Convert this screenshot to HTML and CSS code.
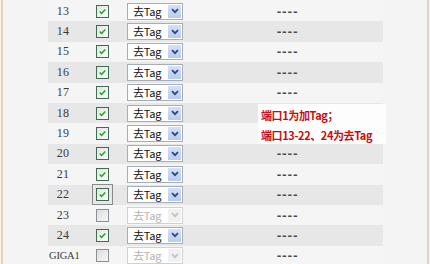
FILE: index.html
```html
<!DOCTYPE html>
<html>
<head>
<meta charset="utf-8">
<link rel="stylesheet" href="styles.css">
</head>
<body>
<div class="frame">
  <div class="panel">
    <div class="table">
      <div class="row"><span class="port">13</span><span class="chk"><span class="box on"><svg viewBox="0 0 13 13"><path d="M3.2 6.6 L5.4 8.8 L9.8 4.2" /></svg></span></span><span class="sel"><span class="dd"><span class="val">去Tag</span><span class="btn"><svg viewBox="0 0 8 6"><path d="M1 1.2 L4 4.2 L7 1.2"/></svg></span></span></span><span class="note">----</span></div>
      <div class="row alt"><span class="port">14</span><span class="chk"><span class="box on"><svg viewBox="0 0 13 13"><path d="M3.2 6.6 L5.4 8.8 L9.8 4.2" /></svg></span></span><span class="sel"><span class="dd"><span class="val">去Tag</span><span class="btn"><svg viewBox="0 0 8 6"><path d="M1 1.2 L4 4.2 L7 1.2"/></svg></span></span></span><span class="note">----</span></div>
      <div class="row"><span class="port">15</span><span class="chk"><span class="box on"><svg viewBox="0 0 13 13"><path d="M3.2 6.6 L5.4 8.8 L9.8 4.2" /></svg></span></span><span class="sel"><span class="dd"><span class="val">去Tag</span><span class="btn"><svg viewBox="0 0 8 6"><path d="M1 1.2 L4 4.2 L7 1.2"/></svg></span></span></span><span class="note">----</span></div>
      <div class="row alt"><span class="port">16</span><span class="chk"><span class="box on"><svg viewBox="0 0 13 13"><path d="M3.2 6.6 L5.4 8.8 L9.8 4.2" /></svg></span></span><span class="sel"><span class="dd"><span class="val">去Tag</span><span class="btn"><svg viewBox="0 0 8 6"><path d="M1 1.2 L4 4.2 L7 1.2"/></svg></span></span></span><span class="note">----</span></div>
      <div class="row"><span class="port">17</span><span class="chk"><span class="box on"><svg viewBox="0 0 13 13"><path d="M3.2 6.6 L5.4 8.8 L9.8 4.2" /></svg></span></span><span class="sel"><span class="dd"><span class="val">去Tag</span><span class="btn"><svg viewBox="0 0 8 6"><path d="M1 1.2 L4 4.2 L7 1.2"/></svg></span></span></span><span class="note">----</span></div>
      <div class="row alt"><span class="port">18</span><span class="chk"><span class="box on"><svg viewBox="0 0 13 13"><path d="M3.2 6.6 L5.4 8.8 L9.8 4.2" /></svg></span></span><span class="sel"><span class="dd"><span class="val">去Tag</span><span class="btn"><svg viewBox="0 0 8 6"><path d="M1 1.2 L4 4.2 L7 1.2"/></svg></span></span></span><span class="note"></span></div>
      <div class="row"><span class="port">19</span><span class="chk"><span class="box on"><svg viewBox="0 0 13 13"><path d="M3.2 6.6 L5.4 8.8 L9.8 4.2" /></svg></span></span><span class="sel"><span class="dd"><span class="val">去Tag</span><span class="btn"><svg viewBox="0 0 8 6"><path d="M1 1.2 L4 4.2 L7 1.2"/></svg></span></span></span><span class="note"></span></div>
      <div class="row alt"><span class="port">20</span><span class="chk"><span class="box on"><svg viewBox="0 0 13 13"><path d="M3.2 6.6 L5.4 8.8 L9.8 4.2" /></svg></span></span><span class="sel"><span class="dd"><span class="val">去Tag</span><span class="btn"><svg viewBox="0 0 8 6"><path d="M1 1.2 L4 4.2 L7 1.2"/></svg></span></span></span><span class="note">----</span></div>
      <div class="row"><span class="port">21</span><span class="chk"><span class="box on"><svg viewBox="0 0 13 13"><path d="M3.2 6.6 L5.4 8.8 L9.8 4.2" /></svg></span></span><span class="sel"><span class="dd"><span class="val">去Tag</span><span class="btn"><svg viewBox="0 0 8 6"><path d="M1 1.2 L4 4.2 L7 1.2"/></svg></span></span></span><span class="note">----</span></div>
      <div class="row alt"><span class="port">22</span><span class="chk"><span class="box on focus"><svg viewBox="0 0 13 13"><path d="M3.2 6.6 L5.4 8.8 L9.8 4.2" /></svg></span></span><span class="sel"><span class="dd"><span class="val">去Tag</span><span class="btn"><svg viewBox="0 0 8 6"><path d="M1 1.2 L4 4.2 L7 1.2"/></svg></span></span></span><span class="note">----</span></div>
      <div class="row"><span class="port">23</span><span class="chk"><span class="box"></span></span><span class="sel"><span class="dd off"><span class="val">去Tag</span><span class="btn"><svg viewBox="0 0 8 6"><path d="M1 1.2 L4 4.2 L7 1.2"/></svg></span></span></span><span class="note">----</span></div>
      <div class="row alt"><span class="port">24</span><span class="chk"><span class="box on"><svg viewBox="0 0 13 13"><path d="M3.2 6.6 L5.4 8.8 L9.8 4.2" /></svg></span></span><span class="sel"><span class="dd"><span class="val">去Tag</span><span class="btn"><svg viewBox="0 0 8 6"><path d="M1 1.2 L4 4.2 L7 1.2"/></svg></span></span></span><span class="note">----</span></div>
      <div class="row last"><span class="port giga">GIGA1</span><span class="chk"><span class="box"></span></span><span class="sel"><span class="dd off"><span class="val">去Tag</span><span class="btn"><svg viewBox="0 0 8 6"><path d="M1 1.2 L4 4.2 L7 1.2"/></svg></span></span></span><span class="note">----</span></div>
      <div class="memo">
        <p>端口1为加Tag；</p>
        <p>端口13-22、24为去Tag</p>
      </div>
    </div>
  </div>
</div>
</body>
</html>
```

FILE: styles.css
```css
html, body {
  margin: 0;
  padding: 0;
}
body {
  width: 430px;
  height: 264px;
  overflow: hidden;
  background: #f3f3f3;
  font-family: "Liberation Serif", "Noto Sans CJK SC", serif;
}
.frame {
  margin-left: 1px;
  width: 424px;
  height: 264px;
  border-left: 2px solid #ead5b2;
  border-right: 2px solid #e6cfcf;
  background: #f4f4f4;
}
.panel {
  padding: 1px 0 0 45px;
}
.table {
  position: relative;
  width: 335px;
  display: flex;
  flex-direction: column;
}
.row {
  height: 20.4px;
  display: grid;
  grid-template-columns: 30px 48px 68px 189px;
  align-items: center;
  background: #f5f5f5;
}
.row.alt {
  background: #e7e7e7;
}
.port {
  text-align: center;
  font-size: 12px;
  color: #3a3a3a;
  letter-spacing: 0.2px;
}
.port.giga {
  font-size: 10.5px;
  letter-spacing: -0.2px;
  padding-left: 1px;
}
.chk {
  display: flex;
  justify-content: center;
}
.box {
  width: 11px;
  height: 11px;
  border: 1px solid #8a9097;
  background: linear-gradient(135deg, #dcdcdc, #f8f8f8);
  display: flex;
}
.box.on {
  border-color: #3f6b55;
  background: linear-gradient(135deg, #e1e6e1, #fbfbfb);
}
.box.focus {
  outline: 1px solid #8a8a8a;
  outline-offset: 3px;
}
.box svg {
  width: 11px;
  height: 11px;
}
.box svg path {
  fill: none;
  stroke: #21a321;
  stroke-width: 1.8;
}
.sel {
  padding-left: 1px;
  display: flex;
}
.dd {
  width: 54px;
  height: 15px;
  border: 1px solid #a6aeb8;
  background: #ffffff;
  display: flex;
  align-items: center;
  justify-content: space-between;
}
.val {
  padding-left: 5px;
  font-size: 11px;
  color: #111;
  font-family: "Noto Sans CJK SC", "Liberation Serif", serif;
  letter-spacing: -0.2px;
  line-height: 15px;
}
.btn {
  width: 13px;
  height: 13px;
  margin-right: 1px;
  background: linear-gradient(#d5e1f6, #b8cbee);
  display: flex;
  align-items: center;
  justify-content: center;
}
.btn svg {
  width: 8px;
  height: 6px;
}
.btn svg path {
  fill: none;
  stroke: #2a4784;
  stroke-width: 1.8;
}
.dd.off {
  border-color: #cfd1d3;
}
.dd.off .val {
  color: #b3b3b3;
}
.dd.off .btn {
  background: #f1f1f1;
}
.dd.off .btn svg path {
  stroke: #c2c2c2;
}
.note {
  text-align: center;
  font-family: "DejaVu Sans Mono", monospace;
  font-weight: bold;
  font-size: 11px;
  color: #4a4a4a;
  letter-spacing: -1.2px;
  padding-right: 4px;
}
.memo {
  position: absolute;
  left: 210px;
  top: 103px;
  width: 128px;
  height: 40px;
  background: #fdfdfd;
  padding: 1px 0 0 3px;
  box-sizing: border-box;
}
.memo p {
  margin: 0;
  height: 20px;
  line-height: 20px;
  font-family: "Noto Sans CJK SC", sans-serif;
  font-weight: bold;
  font-size: 11px;
  color: #c40f0f;
  white-space: nowrap;
  letter-spacing: -0.4px;
}
```
